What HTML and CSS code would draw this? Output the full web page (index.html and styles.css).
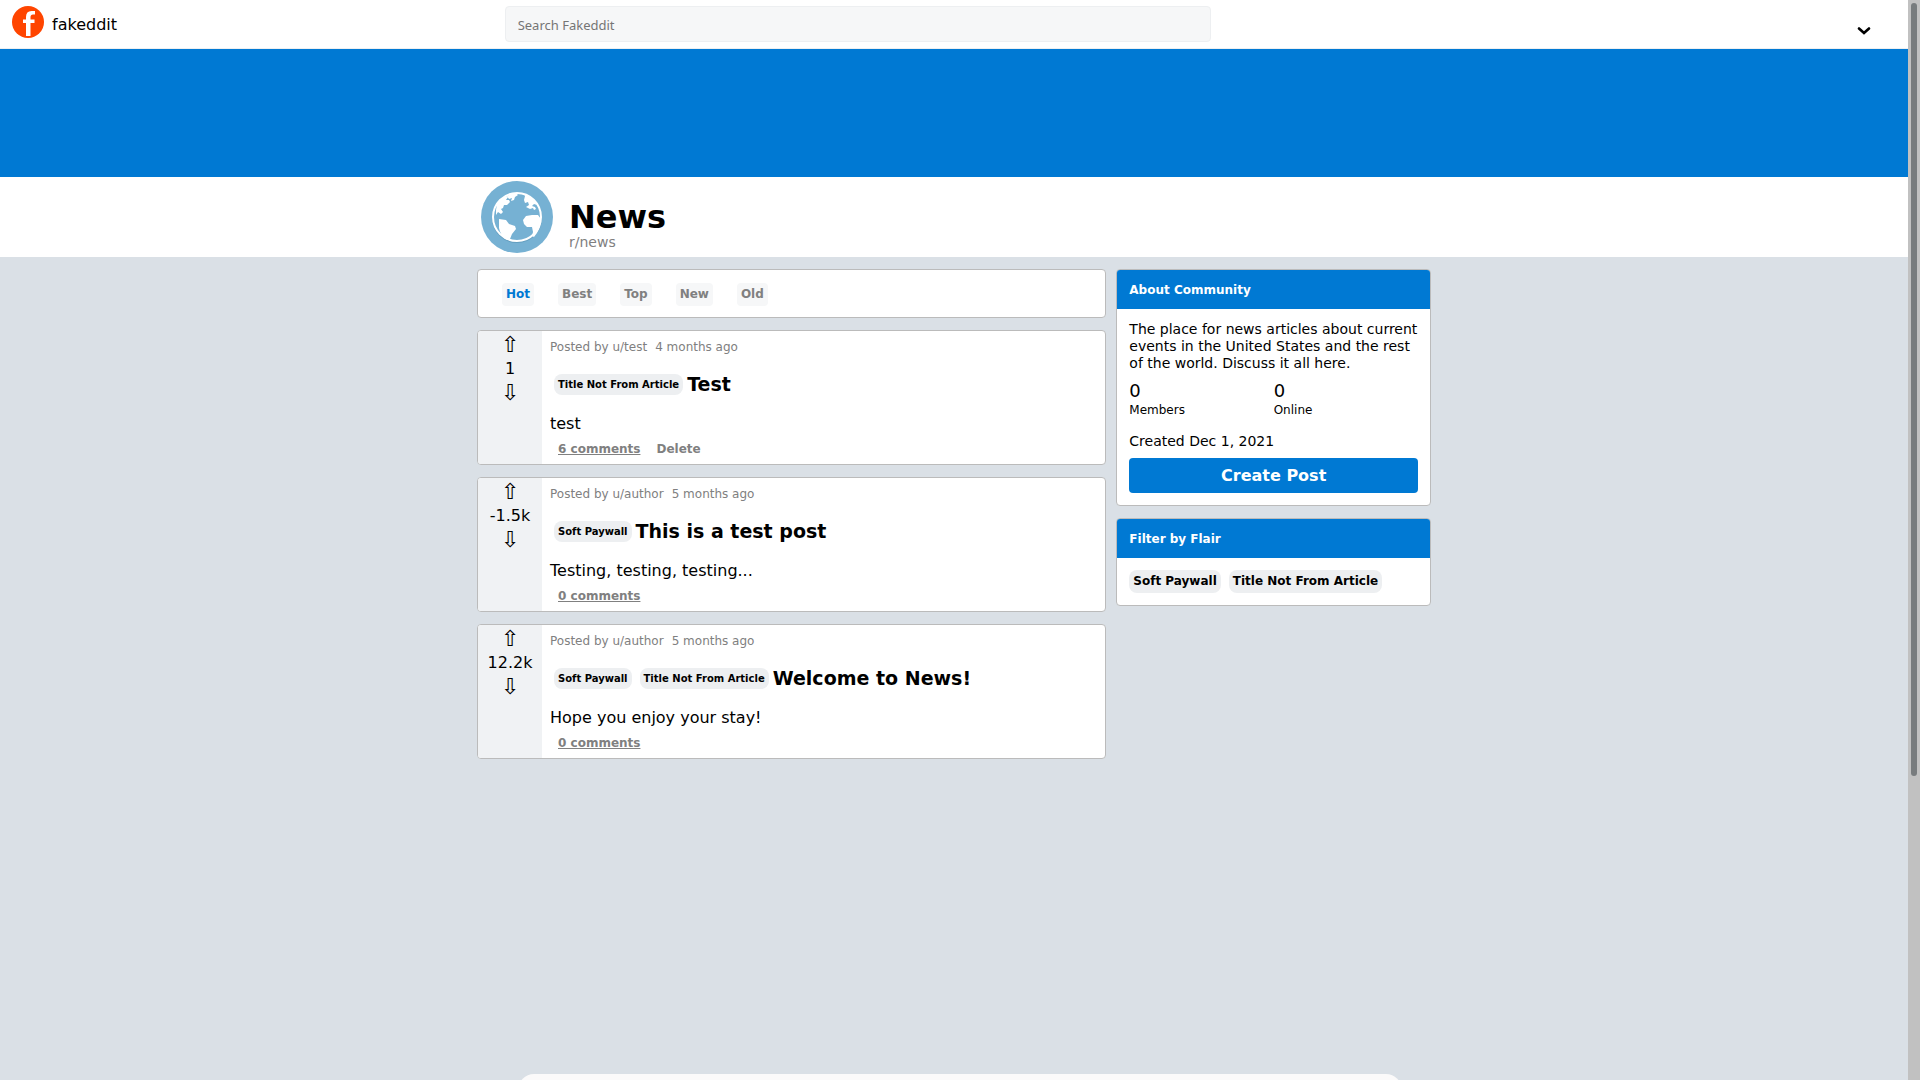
FILE: index.html
```html
<!DOCTYPE html>
<html lang="en">
<head>
<meta charset="utf-8">
<title>News - fakeddit</title>
<link rel="stylesheet" href="styles.css">
</head>
<body>
<header class="topbar">
  <a class="brand" href="#">
    <svg class="brand-logo" viewBox="0 0 32 32" aria-hidden="true">
      <circle cx="16" cy="16" r="16" fill="#ff4500"/>
      <path d="M14 30V17h-3v-3.500h3v-2.500q0-6 5.500-6h3.500v3.500h-2q-2.500 0-2.500 2.500v2.500h4v3.500h-4v13z" fill="#fff"/>
    </svg>
    <span>fakeddit</span>
  </a>
  <input class="search" type="search" placeholder="Search Fakeddit" aria-label="Search Fakeddit">
  <button class="menu-toggle" type="button" aria-label="Open menu">
    <svg width="14" height="8" viewBox="0 0 14 8" aria-hidden="true"><path d="M2 1.500 7 6l5-4.500" fill="none" stroke="#000" stroke-width="2.600" stroke-linecap="round"/></svg>
  </button>
</header>

<div class="banner"></div>

<section class="community">
  <div class="community-inner">
    <svg class="community-icon" viewBox="0 0 72 72" aria-hidden="true">
      <circle cx="36" cy="36" r="36" fill="#76b1d3"/>
      <circle cx="36" cy="37" r="24" fill="none" stroke="#5791b2" stroke-width="2" opacity=".6"/>
      <circle cx="36" cy="36" r="24" fill="#76b1d3" stroke="#fff" stroke-width="2"/>
      <path d="M15 29l1-6 4-5 5-3 2 1-2 3 3 0 1 2-3 3-3 0-1 3-2 1 2 3-2 2-3-2-2 3zM26 15l4-2 5-1 2 2-3 2-1 3-3 1 1-3-3 1zM43 13l1 2-1 4 1 3 3-1 1 3-3 2 4 2 3-1 1 2 2-1-1-2-3-1 2-2 3 1q-4-8-13-11zM51 34l-6 1-3 4 1 4 3 3 5 0 1 5-1 4 2 1q7-8 7-18l-3-4zM18 38l7 1 3 4 6 2 1 3-4 5-2 5-3 1q-7-5-8-12z" fill="#fff"/>
    </svg>
    <div class="community-names">
      <h1>News</h1>
      <p>r/news</p>
    </div>
  </div>
</section>

<div class="layout">
  <main class="feed">
    <nav class="card sorts" aria-label="Sort posts">
      <button class="sort active" type="button">Hot</button>
      <button class="sort" type="button">Best</button>
      <button class="sort" type="button">Top</button>
      <button class="sort" type="button">New</button>
      <button class="sort" type="button">Old</button>
    </nav>

    <article class="card post">
      <div class="votes">
        <button type="button" aria-label="Upvote">⇧</button>
        <span>1</span>
        <button type="button" aria-label="Downvote">⇩</button>
      </div>
      <div class="post-main">
        <p class="meta"><span>Posted by u/test</span><span>4 months ago</span></p>
        <div class="post-title"><span class="flair small">Title Not From Article</span><h2>Test</h2></div>
        <p class="post-body">test</p>
        <div class="actions"><a href="#">6 comments</a><button type="button">Delete</button></div>
      </div>
    </article>

    <article class="card post">
      <div class="votes">
        <button type="button" aria-label="Upvote">⇧</button>
        <span>-1.5k</span>
        <button type="button" aria-label="Downvote">⇩</button>
      </div>
      <div class="post-main">
        <p class="meta"><span>Posted by u/author</span><span>5 months ago</span></p>
        <div class="post-title"><span class="flair small">Soft Paywall</span><h2>This is a test post</h2></div>
        <p class="post-body">Testing, testing, testing...</p>
        <div class="actions"><a href="#">0 comments</a></div>
      </div>
    </article>

    <article class="card post">
      <div class="votes">
        <button type="button" aria-label="Upvote">⇧</button>
        <span>12.2k</span>
        <button type="button" aria-label="Downvote">⇩</button>
      </div>
      <div class="post-main">
        <p class="meta"><span>Posted by u/author</span><span>5 months ago</span></p>
        <div class="post-title"><span class="flair small">Soft Paywall</span><span class="flair small">Title Not From Article</span><h2>Welcome to News!</h2></div>
        <p class="post-body">Hope you enjoy your stay!</p>
        <div class="actions"><a href="#">0 comments</a></div>
      </div>
    </article>
  </main>

  <aside class="sidebar">
    <section class="card">
      <h2 class="card-head">About Community</h2>
      <div class="card-body">
        <p class="about">The place for news articles about current events in the United States and the rest of the world. Discuss it all here.</p>
        <dl class="stats">
          <div><dd>0</dd><dt>Members</dt></div>
          <div><dd>0</dd><dt>Online</dt></div>
        </dl>
        <p class="created">Created Dec 1, 2021</p>
        <button class="create" type="button">Create Post</button>
      </div>
    </section>
    <section class="card">
      <h2 class="card-head">Filter by Flair</h2>
      <div class="card-body flairs">
        <button class="flair" type="button">Soft Paywall</button>
        <button class="flair" type="button">Title Not From Article</button>
      </div>
    </section>
  </aside>
</div>

<div class="drawer"></div>
<div class="scrollbar"><div class="thumb"></div></div>
</body>
</html>
```

FILE: styles.css
```css
* {
  box-sizing: border-box;
}

body {
  margin: 0;
  padding-right: 12px;
  min-height: 100vh;
  background: #dae0e6;
  color: #000;
  font: 16px/19px "DejaVu Sans", sans-serif;
}

h1, h2, p, dl, dd {
  margin: 0;
}

button {
  border: 0;
  padding: 0;
  background: none;
  color: inherit;
  font: inherit;
  cursor: pointer;
}

.topbar {
  display: grid;
  grid-template-columns: 53fr 76fr 71fr;
  align-items: center;
  height: 49px;
  padding: 0 37px 0 12px;
  background: #fff;
  border-bottom: 1px solid #edeff1;
}

.brand {
  display: flex;
  align-items: center;
  gap: 8px;
  padding-bottom: 4px;
  color: #000;
  text-decoration: none;
}

.brand span {
  padding-top: 4px;
}

.brand-logo {
  width: 32px;
  height: 32px;
}

.search {
  width: 100%;
  height: 36px;
  padding: 2px 12px 0;
  border: 1px solid #edeff1;
  border-radius: 4px;
  background: #f6f7f8;
  font: 13px "Noto Sans", sans-serif;
}

.search::placeholder {
  color: #757575;
}

.menu-toggle {
  display: flex;
  justify-self: end;
  padding-top: 14px;
}

.banner {
  height: 128px;
  background: #0079d3;
}

.community {
  background: #fff;
}

.community-inner {
  display: flex;
  gap: 16px;
  width: 50%;
  height: 80px;
  margin: 0 auto;
  padding: 4px;
}

.community-icon {
  flex: none;
  width: 72px;
  height: 72px;
}

.community-names {
  padding-top: 18px;
}

.community-names h1 {
  font-size: 32px;
  line-height: 37px;
}

.community-names p {
  color: #808080;
  font-size: 14px;
  line-height: 12px;
}

.layout {
  display: grid;
  grid-template-columns: 2fr 1fr;
  gap: 10px;
  width: 50%;
  margin: 0 auto;
  padding: 12px 0;
}

.feed, .sidebar {
  display: flex;
  flex-direction: column;
  align-items: stretch;
  gap: 12px;
}

.card {
  overflow: hidden;
  border: 1px solid #bbb;
  border-radius: 4px;
  background: #fff;
}

.sorts {
  display: flex;
  align-items: center;
  gap: 24px;
  height: 49px;
  padding: 2px 24px 0;
}

.sort {
  padding: 4px;
  border-radius: 4px;
  background: #f6f7f8;
  color: #808080;
  font-size: 12px;
  font-weight: bold;
  line-height: 15px;
}

.sort.active {
  color: #0079d3;
}

.post {
  display: flex;
}

.votes {
  display: flex;
  flex: none;
  flex-direction: column;
  align-items: center;
  width: 64px;
  padding-top: 2px;
  background: #f0f2f4;
  line-height: 24px;
}

.votes button {
  height: 24px;
  font-size: 22px;
}

.post-main {
  padding: 8px;
}

.meta {
  display: flex;
  gap: 8px;
  color: #808080;
  font-size: 12px;
  line-height: 17px;
}

.post-title {
  display: flex;
  align-items: center;
  gap: 8px;
  padding: 17px 4px 19px;
}

.post-title h2 {
  margin-left: -4px;
  font-size: 19px;
  line-height: 22px;
}

.flair {
  padding: 4px;
  border-radius: 8px;
  background: #edeff1;
  font-size: 12px;
  font-weight: bold;
  line-height: 15px;
}

.flair.small {
  font-size: 10px;
  line-height: 13px;
}

.actions {
  display: flex;
  gap: 16px;
  padding: 9px 8px 0;
  color: #808080;
  font-size: 12px;
  font-weight: bold;
  line-height: 14px;
}

.actions a {
  color: inherit;
}

.card-head {
  padding: 13px 12px 11px;
  background: #0079d3;
  color: #fff;
  font-size: 12px;
  line-height: 15px;
}

.card-body {
  padding: 12px;
}

.about {
  font-size: 14px;
  line-height: 17px;
}

.stats {
  display: grid;
  grid-template-columns: 1fr 1fr;
  padding: 8px 0 15px;
  font-size: 12px;
  line-height: 16px;
}

.stats div {
  display: flex;
  flex-direction: column;
}

.stats dd {
  font-size: 18px;
  line-height: 22px;
}

.created {
  padding-bottom: 8px;
  font-size: 14px;
  line-height: 17px;
}

.create {
  width: 100%;
  height: 35px;
  border-radius: 4px;
  background: #0079d3;
  color: #fff;
  font-weight: bold;
}

.flairs {
  display: flex;
  gap: 8px;
}

.drawer {
  position: fixed;
  right: 27%;
  bottom: -34px;
  left: 27%;
  height: 40px;
  border-radius: 16px;
  background: #fbfafa;
}

.scrollbar {
  position: fixed;
  top: 0;
  right: 0;
  bottom: 0;
  width: 12px;
  padding: 3px;
  background: #c1c1c1;
}

.thumb {
  height: 72%;
  border-radius: 3px;
  background: #787c7e;
}
```
